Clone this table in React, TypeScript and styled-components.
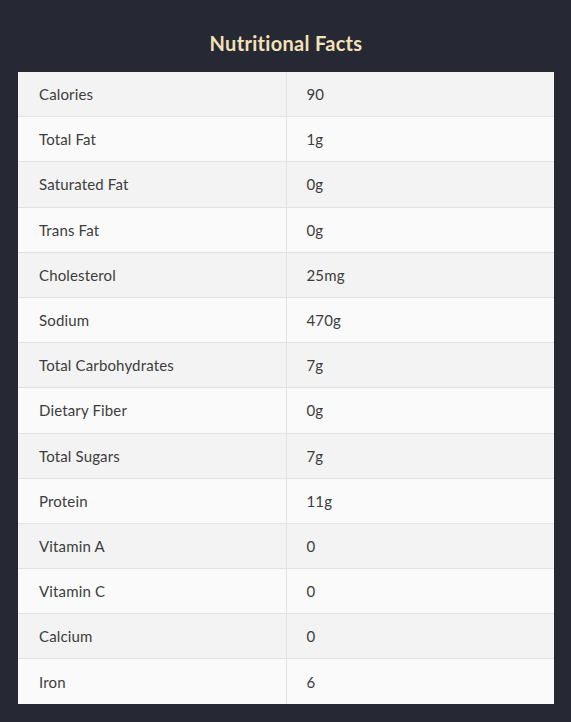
import React from "react";
import styled, { createGlobalStyle } from "styled-components";

const GlobalStyle = createGlobalStyle`
  html, body {
    margin: 0;
    padding: 0;
    background: #262833;
  }
  body {
    font-family: Lato, "Noto Sans", sans-serif;
  }
`;

const Page = styled.div`
  min-height: 722px;
  padding: 0 17px 18px 18px;
  box-sizing: border-box;
`;

const Title = styled.h1`
  margin: 0;
  height: 72px;
  display: flex;
  align-items: center;
  justify-content: center;
  padding-top: 13px;
  box-sizing: border-box;
  color: #f3e2b8;
  font-size: 20px;
  font-weight: 700;
  letter-spacing: 0.3px;
`;

const Table = styled.table`
  width: 100%;
  border-collapse: collapse;
  table-layout: fixed;
`;

const Row = styled.tr<{ $odd: boolean }>`
  background: ${(p) => (p.$odd ? "#f3f3f3" : "#fafafa")};
  border-bottom: 1px solid #e2e2e2;

  &:last-child {
    border-bottom: none;
  }
`;

const Td = styled.td`
  height: 44.2px;
  padding: 0 20px 0 21px;
  font-size: 15px;
  color: #3d3d3d;
  letter-spacing: 0.15px;
  vertical-align: middle;

  & + & {
    border-left: 1px solid #e2e2e2;
    padding-left: 20px;
  }
`;

const facts: [string, string][] = [
  ["Calories", "90"],
  ["Total Fat", "1g"],
  ["Saturated Fat", "0g"],
  ["Trans Fat", "0g"],
  ["Cholesterol", "25mg"],
  ["Sodium", "470g"],
  ["Total Carbohydrates", "7g"],
  ["Dietary Fiber", "0g"],
  ["Total Sugars", "7g"],
  ["Protein", "11g"],
  ["Vitamin A", "0"],
  ["Vitamin C", "0"],
  ["Calcium", "0"],
  ["Iron", "6"],
];

export default function App() {
  return (
    <>
      <GlobalStyle />
      <Page>
        <Title>Nutritional Facts</Title>
        <Table>
          <tbody>
            {facts.map(([name, value], i) => (
              <Row key={name} $odd={i % 2 === 0}>
                <Td>{name}</Td>
                <Td>{value}</Td>
              </Row>
            ))}
          </tbody>
        </Table>
      </Page>
    </>
  );
}
